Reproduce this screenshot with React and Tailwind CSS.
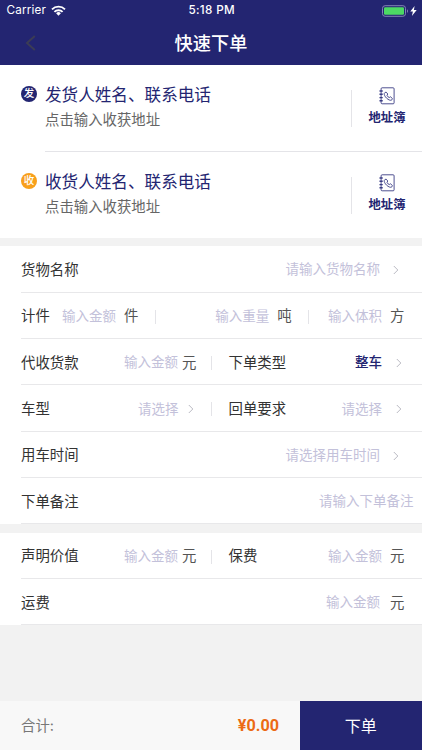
import React from 'react';

const Chevron = ({ className = '' }) => (
    <svg className={`h-[10px] w-[6px] shrink-0 ${className}`} viewBox="0 0 6 10" fill="none" stroke="#b9b9c2" strokeWidth="1">
        <path d="M0.8 1l4 4-4 4" />
    </svg>
);

const Separator = () => <span className="h-[14px] w-px shrink-0 bg-[#e4e4e8]" />;

const Hint = ({ children, className = '' }) => (
    <span className={`text-[13.5px] text-[#c3c1da] ${className}`}>{children}</span>
);

const Unit = ({ children, className = '' }) => (
    <span className={`text-[14.4px] text-[#555] ${className}`}>{children}</span>
);

// Form row, the bottom line starts at the label
function Row({ children }) {
    return (
        <div className="ml-[21px] flex h-[46.35px] items-center border-b border-[#e8e8ea] pt-[2.5px] text-[14.4px] text-[#333]">
            {children}
        </div>
    );
}

function StatusBar() {
    return (
        <div className="flex h-[21px] items-center pt-px text-white">
            <div className="flex flex-1 items-center pl-[6.5px]">
                <span className="text-[11.7px] tracking-[0.2px]">Carrier</span>
                <svg className="ml-[5px] h-[11px] w-[15px]" viewBox="0 0 15 11" fill="none" stroke="white" strokeWidth="1.9">
                    <path d="M1 4.3a9.2 9.2 0 0 1 13 0" />
                    <path d="M3.4 6.9a5.8 5.8 0 0 1 8.2 0" />
                    <path d="M7.5 10.8L5.1 8.3a3.4 3.4 0 0 1 4.8 0z" fill="white" stroke="none" />
                </svg>
            </div>
            <span className="text-[11.7px] font-medium tracking-[0.35px]">5:18 PM</span>
            <div className="flex flex-1 items-center justify-end pb-px pr-[5px]">
                <svg className="h-[12px] w-[27px]" viewBox="0 0 27 12">
                    <rect x="0.5" y="0.7" width="23" height="10.6" rx="2.6" fill="none" stroke="#8384b4" />
                    <rect x="2" y="2.2" width="20" height="7.6" rx="1.2" fill="#4cd964" />
                    <path d="M25 4.2c1.3 0.5 1.3 3.1 0 3.6z" fill="#8384b4" />
                </svg>
                <svg className="ml-[1px] h-[10px] w-[7px]" viewBox="0 0 7 10" fill="white">
                    <path d="M4.6 0L0.3 5.5h2.6L1.9 10l4.8-5.9H3.9z" />
                </svg>
            </div>
        </div>
    );
}

function AddressRow({ badge, badgeColor, title }) {
    return (
        <div className="flex pl-[21px] pt-[20px]">
            <span className={`mt-px flex size-[16px] shrink-0 items-center justify-center rounded-full pt-px text-[10.5px] font-medium text-white ${badgeColor}`}>
                {badge}
            </span>
            <div className="ml-[8px] flex-1 pt-[2px]">
                <p className="text-[16.6px] leading-[17px] text-[#232571]">{title}</p>
                <p className="mt-[7px] text-[14.4px] leading-[17px] text-[#666]">点击输入收获地址</p>
            </div>
            <div className="mt-[5px] h-[37px] w-px bg-[#e4e4e8]" />
            <div className="flex w-[70px] flex-col items-center">
                <svg className="mt-[2px] h-[18px] w-[17px]" viewBox="0 0 17 18" fill="none" stroke="#3b3d84" strokeWidth="0.9">
                    <rect x="2.1" y="0.8" width="13" height="16" rx="1" />
                    <path d="M0.5 4h3.2M0.5 7.2h3.2M0.5 10.6h3.2M0.5 13.8h3.2" strokeWidth="1.4" />
                    <path d="M5.9 5.6L7.1 5.1L8.8 7L8 8.3C8.3 9.4 9.1 10.2 10.3 10.5L11.5 9.8L13.4 11.5L12.9 12.8C12.1 13.6 10.7 13.4 9 12.3C7 11 5.5 8.9 5.2 7.2Q5.1 6.1 5.9 5.6z" />
                </svg>
                <span className="mt-[4px] text-[12.3px] font-bold leading-[17px] text-[#232571]">地址簿</span>
            </div>
        </div>
    );
}

export default function App() {
    return (
        <div className="flex h-[750px] w-[422px] flex-col overflow-hidden bg-[#f2f2f2] font-['Inter','Noto_Sans_CJK_SC',sans-serif] leading-none whitespace-nowrap">
            <header className="h-[65px] bg-[#232571]">
                <StatusBar />
                <div className="grid h-[44px] grid-cols-[1fr_auto_1fr] items-center">
                    <svg className="ml-[25px] h-[16px] w-[11px]" viewBox="0 0 11 16" fill="none" stroke="#3b3c55" strokeWidth="2">
                        <path d="M9.8 1L2 8l7.8 7" />
                    </svg>
                    <h1 className="text-[18.2px] font-medium leading-none text-white">快速下单</h1>
                </div>
            </header>

            {/* 发货人 / 收货人 */}
            <section className="h-[173px] bg-white">
                <div className="h-[86px]">
                    <AddressRow badge="发" badgeColor="bg-[#232571]" title="发货人姓名、联系电话" />
                </div>
                <div className="ml-[45px] h-px bg-[#e4e4e8]" />
                <AddressRow badge="收" badgeColor="bg-[#f8a01c]" title="收货人姓名、联系电话" />
            </section>

            {/* 货物信息 */}
            <section className="mt-[8.3px] bg-white">
                <Row>
                    <span className="flex-1">货物名称</span>
                    <Hint>请输入货物名称</Hint>
                    <Chevron className="ml-[13px] mr-[23px]" />
                </Row>
                <Row>
                    <span className="w-[41px]">计件</span>
                    <Hint>输入金额</Hint>
                    <Unit className="ml-[8px] w-[31px]">件</Unit>
                    <Separator />
                    <Hint className="ml-auto">输入重量</Hint>
                    <Unit className="ml-[8px] mr-[16px]">吨</Unit>
                    <Separator />
                    <Hint className="ml-[19.5px]">输入体积</Hint>
                    <Unit className="ml-[8px] mr-[17.5px]">方</Unit>
                </Row>
                <Row>
                    <span className="flex-1">代收货款</span>
                    <Hint>输入金额</Hint>
                    <Unit className="ml-[4px] mr-[14px]">元</Unit>
                    <Separator />
                    <div className="flex w-[210.5px] items-center pl-[17px]">
                        <span className="flex-1">下单类型</span>
                        <span className="text-[13.5px] font-medium text-[#232571]">整车</span>
                        <Chevron className="ml-[13.5px] mr-[20.5px]" />
                    </div>
                </Row>
                <Row>
                    <span className="flex-1">车型</span>
                    <Hint>请选择</Hint>
                    <Chevron className="ml-[9px] mr-[17px]" />
                    <Separator />
                    <div className="flex w-[210.5px] items-center pl-[17px]">
                        <span className="flex-1">回单要求</span>
                        <Hint>请选择</Hint>
                        <Chevron className="ml-[13.5px] mr-[20.5px]" />
                    </div>
                </Row>
                <Row>
                    <span className="flex-1">用车时间</span>
                    <Hint>请选择用车时间</Hint>
                    <Chevron className="ml-[13px] mr-[23px]" />
                </Row>
                <Row>
                    <span className="flex-1">下单备注</span>
                    <Hint className="mr-[8.5px]">请输入下单备注</Hint>
                </Row>
            </section>

            {/* 费用 */}
            <section className="mt-[8.3px] bg-white">
                <Row>
                    <span className="flex-1">声明价值</span>
                    <Hint>输入金额</Hint>
                    <Unit className="ml-[4px] mr-[14px]">元</Unit>
                    <Separator />
                    <div className="flex w-[210.5px] items-center pl-[17px]">
                        <span className="flex-1">保费</span>
                        <Hint>输入金额</Hint>
                        <Unit className="ml-[8px] mr-[17.5px]">元</Unit>
                    </div>
                </Row>
                <Row>
                    <span className="flex-1">运费</span>
                    <Hint>输入金额</Hint>
                    <Unit className="ml-[10px] mr-[17.5px]">元</Unit>
                </Row>
            </section>

            <footer className="mt-auto flex h-[49px] bg-[#f8f8f8]">
                <div className="flex flex-1 items-center justify-between pl-[21px] pr-[20.5px] pt-[2px]">
                    <span className="text-[14.4px] text-[#777]">合计:</span>
                    <span className="font-['Roboto','Noto_Sans_CJK_SC',sans-serif] text-[16.2px] font-bold text-[#ec6a14]">¥0.00</span>
                </div>
                <button className="w-[122.5px] bg-[#232571] text-[16px] text-white">下单</button>
            </footer>
        </div>
    );
}
